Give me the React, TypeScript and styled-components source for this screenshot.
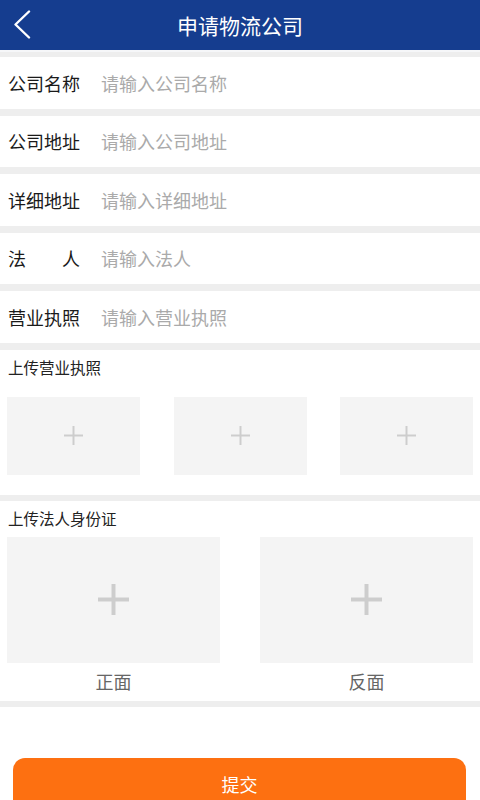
import styled, { createGlobalStyle } from "styled-components";

const blue = "#153d8f";
const orange = "#fd7011";
const grey = "#eeeeee";
const boxGrey = "#f4f4f4";
const plusGrey = "#cdcdcd";

const fields = [
  { label: "公司名称", placeholder: "请输入公司名称" },
  { label: "公司地址", placeholder: "请输入公司地址" },
  { label: "详细地址", placeholder: "请输入详细地址" },
  { label: "法人", placeholder: "请输入法人" },
  { label: "营业执照", placeholder: "请输入营业执照" },
];

const PlusIcon = ({ size, stroke }: { size: number; stroke: number }) => (
  <svg width={size} height={size} viewBox={`0 0 ${size} ${size}`}>
    <rect x={(size - stroke) / 2} y={0} width={stroke} height={size} fill={plusGrey} />
    <rect x={0} y={(size - stroke) / 2} width={size} height={stroke} fill={plusGrey} />
  </svg>
);

const App = () => {
  return (
    <Page>
      <GlobalStyle />
      <Header>
        <BackButton aria-label="返回">
          <svg width="20" height="30" viewBox="0 0 20 30">
            <polyline
              points="15,1.5 1.5,14.5 15,27.5"
              fill="none"
              stroke="#fff"
              strokeWidth="2.4"
              strokeLinecap="round"
              strokeLinejoin="round"
            />
          </svg>
        </BackButton>
        <HeaderTitle>申请物流公司</HeaderTitle>
      </Header>

      <Fields>
        {fields.map((f) => (
          <Row key={f.label}>
            {/* labels spread over the width of four characters */}
            <Label>
              {f.label.split("").map((ch, i) => (
                <span key={i}>{ch}</span>
              ))}
            </Label>
            <Input placeholder={f.placeholder} />
          </Row>
        ))}
      </Fields>

      <Section $top={8} $bottom={20}>
        <SectionTitle>上传营业执照</SectionTitle>
        <UploadGrid $cols={3} $gap={33.5} $top={21}>
          {[0, 1, 2].map((i) => (
            <UploadBox key={i} $height={78}>
              <PlusIcon size={19} stroke={2} />
            </UploadBox>
          ))}
        </UploadGrid>
      </Section>

      <Section $top={8} $bottom={10}>
        <SectionTitle>上传法人身份证</SectionTitle>
        <UploadGrid $cols={2} $gap={40} $top={10}>
          {["正面", "反面"].map((side) => (
            <IdCard key={side}>
              <UploadBox $height={126}>
                <PlusIcon size={31} stroke={4} />
              </UploadBox>
              <IdLabel>{side}</IdLabel>
            </IdCard>
          ))}
        </UploadGrid>
      </Section>

      <Footer>
        <SubmitButton>提交</SubmitButton>
      </Footer>
    </Page>
  );
};

export default App;

const GlobalStyle = createGlobalStyle`
  html, body {
    margin: 0;
    padding: 0;
    background: ${grey};
  }
  body {
    font-family: "Noto Sans CJK SC", "Noto Sans", sans-serif;
  }
  * {
    box-sizing: border-box;
  }
`;

const Page = styled.div`
  width: 480px;
  min-height: 800px;
  background: ${grey};
  display: flex;
  flex-direction: column;
`;

const Header = styled.header`
  height: 52px;
  background: ${blue};
  border-bottom: 2px solid #f6f7f9;
  display: flex;
  align-items: center;
  justify-content: center;
  position: relative;
`;

const BackButton = styled.button`
  position: absolute;
  left: 14px;
  top: 9px;
  width: 22px;
  height: 32px;
  padding: 0;
  border: none;
  background: transparent;
  display: flex;
  align-items: center;
`;

const HeaderTitle = styled.h1`
  margin: 0;
  color: #fff;
  font-size: 21px;
  font-weight: 400;
  line-height: 50px;
`;

const Fields = styled.div`
  display: flex;
  flex-direction: column;
  gap: 7px;
  margin-top: 5px;
  margin-bottom: 7px;
`;

const Row = styled.div`
  height: 51.5px;
  background: #fff;
  display: flex;
  align-items: center;
  padding-left: 8px;
`;

const Label = styled.span`
  width: 72px;
  margin-right: 21px;
  flex-shrink: 0;
  display: flex;
  justify-content: space-between;
  white-space: nowrap;
  font-size: 18px;
  color: #1a1a1a;
`;

const Input = styled.input`
  flex: 1;
  min-width: 0;
  border: none;
  outline: none;
  background: transparent;
  padding: 0;
  font-family: "Noto Sans CJK SC", "Noto Sans", sans-serif;
  font-size: 18px;
  color: #222;

  &::placeholder {
    color: #aaaaaa;
  }
`;

const Section = styled.section<{ $top: number; $bottom: number }>`
  background: #fff;
  padding: ${(p) => p.$top}px 7px ${(p) => p.$bottom}px;
  margin-bottom: 6px;
`;

const SectionTitle = styled.h2`
  margin: 0 0 0 1px;
  font-size: 15.5px;
  font-weight: 400;
  color: #222;
  line-height: 18px;
`;

const UploadGrid = styled.div<{ $cols: number; $gap: number; $top: number }>`
  display: grid;
  grid-template-columns: repeat(${(p) => p.$cols}, 1fr);
  column-gap: ${(p) => p.$gap}px;
  margin-top: ${(p) => p.$top}px;
`;

const UploadBox = styled.div<{ $height: number }>`
  height: ${(p) => p.$height}px;
  background: ${boxGrey};
  display: flex;
  align-items: center;
  justify-content: center;
`;

const IdCard = styled.div`
  display: flex;
  flex-direction: column;
`;

const IdLabel = styled.span`
  margin-top: 8px;
  text-align: center;
  font-size: 18px;
  line-height: 20px;
  color: #666;
`;

const Footer = styled.div`
  flex: 1;
  background: #fff;
  padding: 51px 14px 0 13px;
`;

const SubmitButton = styled.button`
  width: 100%;
  height: 56px;
  border: none;
  border-radius: 12px;
  background: ${orange};
  color: #fff;
  font-family: "Noto Sans CJK SC", "Noto Sans", sans-serif;
  font-size: 18px;
  display: flex;
  justify-content: center;
  padding: 14px 0 0;
  line-height: 24px;
`;
